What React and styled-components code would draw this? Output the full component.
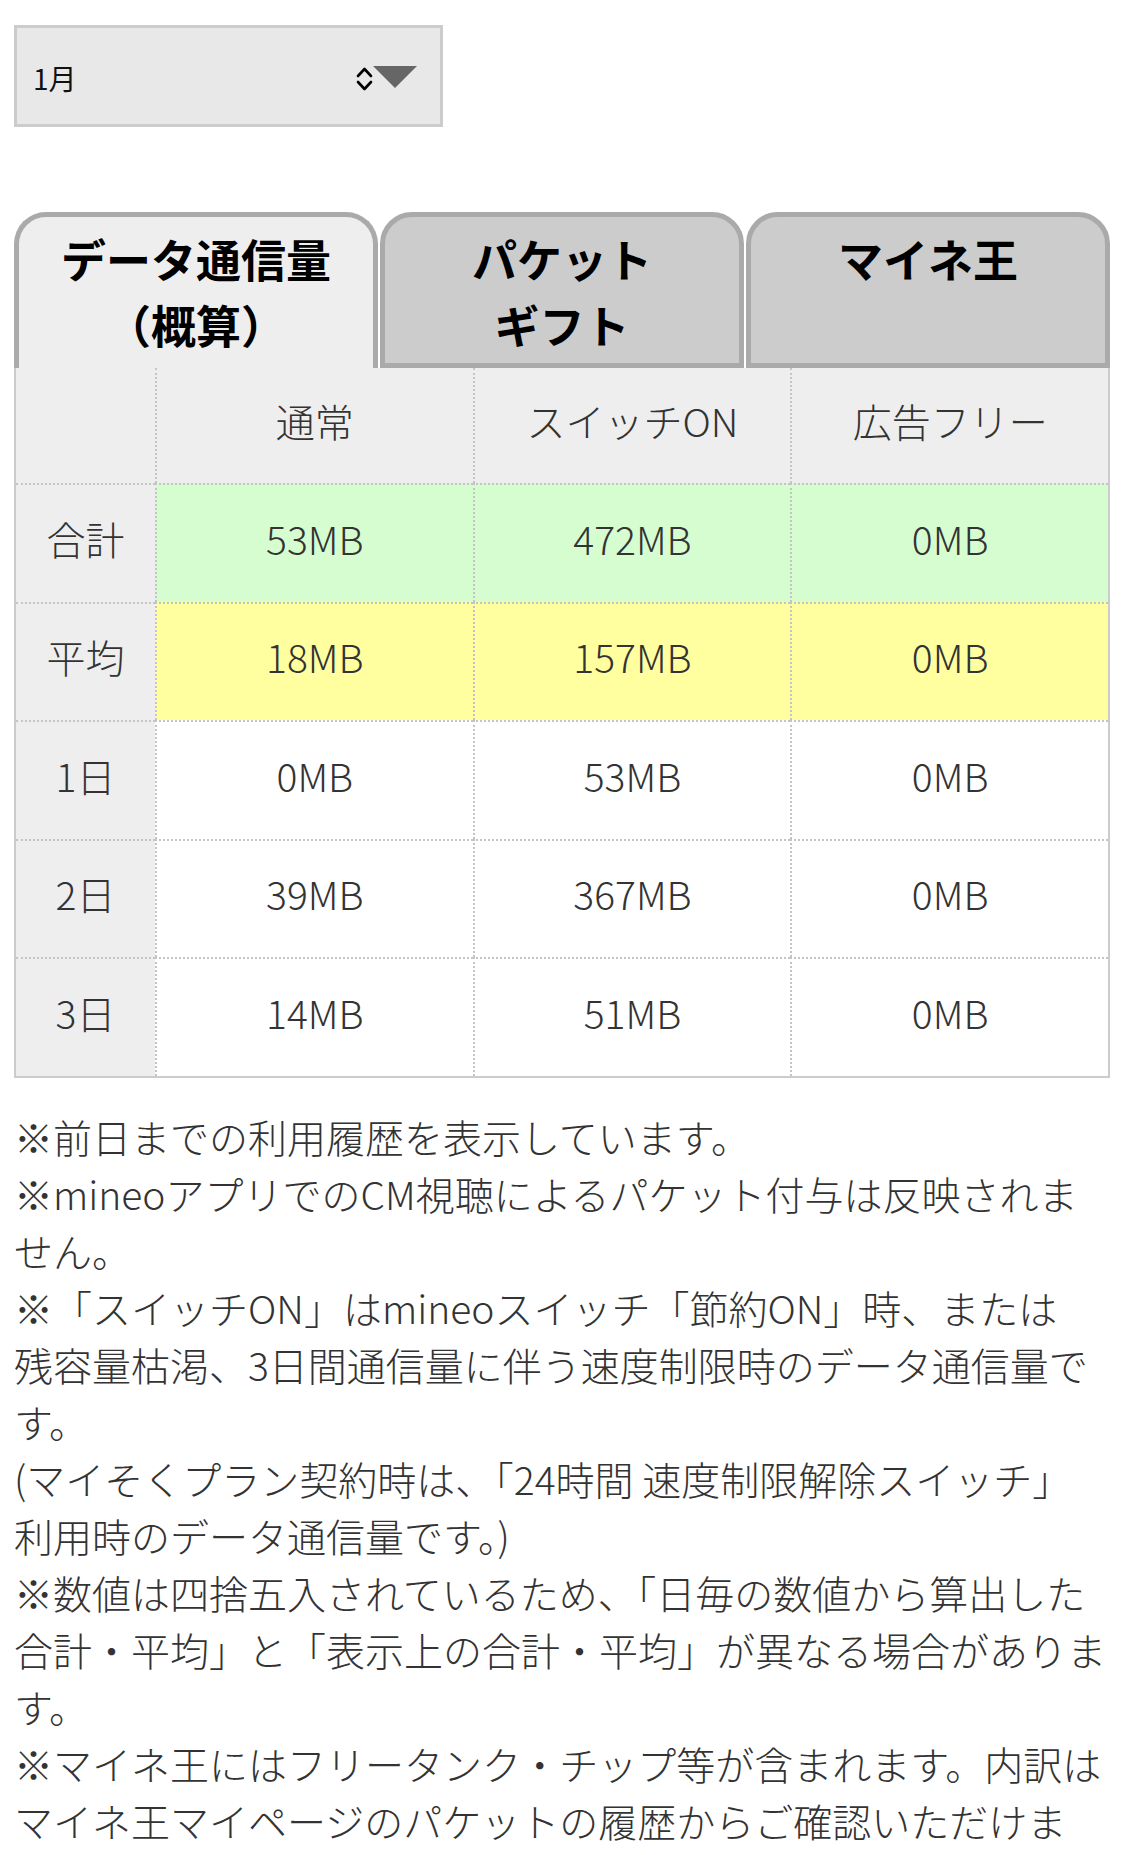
import React from "react";
import styled, { createGlobalStyle } from "styled-components";

const GlobalStyle = createGlobalStyle`
  html, body { margin: 0; padding: 0; background: #fff; }
  body {
    font-family: "Noto Sans CJK JP", "Noto Sans", sans-serif;
    color: #333;
  }
`;

const Page = styled.div`
  box-sizing: border-box;
  width: 1124px;
  padding: 25px 14px 0;
`;

const MonthSelect = styled.div`
  box-sizing: border-box;
  width: 429px;
  height: 102px;
  border: 3px solid #cccccc;
  background: #e8e8e8;
  display: flex;
  align-items: center;
  justify-content: space-between;
  padding: 0 22px 0 16px;
`;

const MonthLabel = styled.span`
  font-size: 28px;
  line-height: 1;
  color: #111;
  margin-top: 4px;
`;

const SelectIcon = styled.svg`
  display: block;
  margin-top: 6px;
`;

const Tabs = styled.div`
  display: flex;
  gap: 2px;
  margin-top: 85px;
  height: 156px;
`;

const Tab = styled.div`
  box-sizing: border-box;
  flex: 1;
  border: 5px solid #aaaaaa;
  border-bottom: ${(p) => (p.$active ? "none" : "5px solid #aaaaaa")};
  border-radius: 32px 32px 0 0;
  background: ${(p) => (p.$active ? "#eeeeee" : "#cccccc")};
  padding-top: 9px;
  text-align: center;
  font-size: 45px;
  font-weight: 700;
  line-height: 66px;
  color: #000;
`;

const Table = styled.div`
  box-sizing: border-box;
  display: grid;
  grid-template-columns: 139px repeat(3, 1fr);
  border: 2px solid #cccccc;
  border-top: none;
`;

const Cell = styled.div`
  box-sizing: border-box;
  display: flex;
  align-items: center;
  justify-content: center;
  height: ${(p) => (p.$head ? "115px" : "118.5px")};
  padding-bottom: 10px;
  font-size: 39px;
  font-weight: 300;
  line-height: 57px;
  color: #333;
  background: ${(p) =>
    p.$tone === "green"
      ? "#d6fdd0"
      : p.$tone === "yellow"
      ? "#ffffa0"
      : p.$tone === "gray"
      ? "#eeeeee"
      : "#ffffff"};
  border-top: ${(p) => (p.$head ? "none" : "2px dotted #c4c4c4")};
  border-left: ${(p) => (p.$first ? "none" : "2px dotted #c4c4c4")};
`;

const Notes = styled.div`
  margin-top: 30px;
  font-size: 39px;
  font-weight: 300;
  line-height: 57px;
  color: #333;
  white-space: nowrap;
`;

const Note = styled.p`
  margin: 0;
`;

const heads = ["通常", "スイッチON", "広告フリー"];

const rows = [
  { label: "合計", values: ["53MB", "472MB", "0MB"], tone: "green" },
  { label: "平均", values: ["18MB", "157MB", "0MB"], tone: "yellow" },
  { label: "1日", values: ["0MB", "53MB", "0MB"], tone: "white" },
  { label: "2日", values: ["39MB", "367MB", "0MB"], tone: "white" },
  { label: "3日", values: ["14MB", "51MB", "0MB"], tone: "white" },
];

const notes = [
  ["※前日までの利用履歴を表示しています。"],
  ["※mineoアプリでのCM視聴によるパケット付与は反映されま", "せん。"],
  [
    "※「スイッチON」はmineoスイッチ「節約ON」時、または",
    "残容量枯渇、3日間通信量に伴う速度制限時のデータ通信量で",
    "す。",
  ],
  [
    "(マイそくプラン契約時は、「24時間 速度制限解除スイッチ」",
    "利用時のデータ通信量です。)",
  ],
  [
    "※数値は四捨五入されているため、「日毎の数値から算出した",
    "合計・平均」と「表示上の合計・平均」が異なる場合がありま",
    "す。",
  ],
  [
    "※マイネ王にはフリータンク・チップ等が含まれます。内訳は",
    "マイネ王マイページのパケットの履歴からご確認いただけま",
  ],
];

export default function App() {
  return (
    <>
      <GlobalStyle />
      <Page>
        <MonthSelect>
          <MonthLabel>1月</MonthLabel>
          <SelectIcon width="62" height="26" viewBox="0 0 62 26">
            <polyline
              points="2,10 8.5,3 15,10"
              fill="none"
              stroke="#000"
              strokeWidth="2.6"
              strokeLinecap="round"
              strokeLinejoin="round"
            />
            <polyline
              points="2,16 8.5,23 15,16"
              fill="none"
              stroke="#000"
              strokeWidth="2.6"
              strokeLinecap="round"
              strokeLinejoin="round"
            />
            <polygon points="17,0 61,0 39,22" fill="#666" />
          </SelectIcon>
        </MonthSelect>

        <Tabs>
          <Tab $active>
            データ通信量
            <br />
            （概算）
          </Tab>
          <Tab>
            パケット
            <br />
            ギフト
          </Tab>
          <Tab>マイネ王</Tab>
        </Tabs>

        <Table>
          <Cell $head $first $tone="gray" />
          {heads.map((h) => (
            <Cell key={h} $head $tone="gray">
              {h}
            </Cell>
          ))}
          {rows.map((r) => (
            <React.Fragment key={r.label}>
              <Cell $first $tone="gray">
                {r.label}
              </Cell>
              {r.values.map((v, i) => (
                <Cell key={i} $tone={r.tone}>
                  {v}
                </Cell>
              ))}
            </React.Fragment>
          ))}
        </Table>

        <Notes>
          {notes.map((lines, i) => (
            <Note key={i}>
              {lines.map((l, j) => (
                <React.Fragment key={j}>
                  {j > 0 && <br />}
                  {l}
                </React.Fragment>
              ))}
            </Note>
          ))}
        </Notes>
      </Page>
    </>
  );
}
